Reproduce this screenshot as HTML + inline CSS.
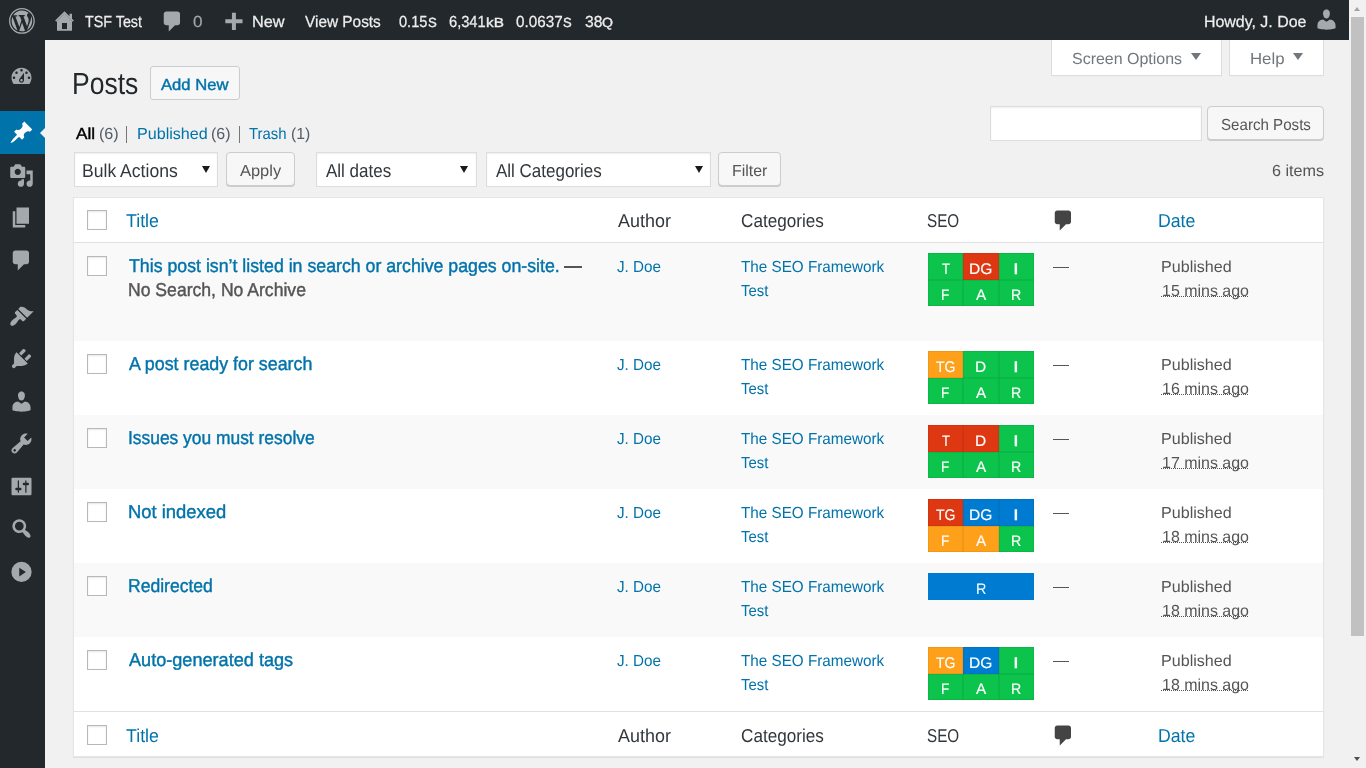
<!DOCTYPE html>
<html lang="en"><head><meta charset="utf-8"><title>Posts ‹ TSF Test — WordPress</title>
<style>
html,body{margin:0;padding:0;width:1366px;height:768px;overflow:hidden;background:#f1f1f1;}
body{position:relative;font-family:"Liberation Sans",sans-serif;}
.t{position:absolute;white-space:nowrap;transform-origin:0 0;display:block;}
.i{position:absolute;display:block;overflow:visible;}
#w{position:absolute;left:0;top:0;width:1366px;height:768px;will-change:transform;text-rendering:geometricPrecision;}
</style></head><body>
<div id="w">
<div style="position:absolute;left:0px;top:0px;width:1349px;height:40px;background:#23282d"></div>
<div style="position:absolute;left:0px;top:40px;width:45px;height:728px;background:#23282d"></div>
<div style="position:absolute;left:0px;top:111.25px;width:45px;height:42.5px;background:#0073aa"></div>
<div style="position:absolute;left:40px;top:127.5px;width:0;height:0;border:5px solid transparent;border-left-width:0;border-right:5px solid #f1f1f1"></div>
<div style="position:absolute;left:1349px;top:0px;width:17px;height:768px;background:#f1f1f1"></div>
<div style="position:absolute;left:1351px;top:17px;width:13px;height:619px;background:#c1c1c1"></div>
<div style="position:absolute;left:1353.7px;top:6.6px;width:0;height:0;border:3.8px solid transparent;border-top-width:0;border-bottom:4.4px solid #a3a3a3"></div>
<div style="position:absolute;left:1353.7px;top:756.8px;width:0;height:0;border:3.8px solid transparent;border-bottom-width:0;border-top:4.4px solid #505050"></div>
<svg class="i" style="left:8.5px;top:7.6px" width="25.8" height="25.8" viewBox="0 0 20 20"><path fill="#a4a9ad" fill-rule="evenodd" d="M20 10c0-5.52-4.48-10-10-10S0 4.48 0 10s4.48 10 10 10 10-4.48 10-10zM10 1.01c4.97 0 8.99 4.02 8.99 8.99s-4.02 8.99-8.99 8.99S1.01 14.97 1.01 10 5.03 1.01 10 1.01zM8.01 14.82L4.96 6.61c.49-.03 1.05-.08 1.05-.08.43-.05.38-1.01-.06-.99 0 0-1.29.1-2.13.1-.15 0-.33 0-.52-.01 1.44-2.17 3.9-3.6 6.7-3.6 2.09 0 3.99.79 5.41 2.09-.6-.08-1.45.35-1.45 1.42 0 .66.38 1.22.79 1.88.31.54.5 1.22.5 2.21 0 1.34-1.27 4.48-1.27 4.48l-2.71-7.5c.48-.03.75-.16.75-.16.43-.05.38-1.1-.05-1.08 0 0-1.3.11-2.14.11-.78 0-2.11-.11-2.11-.11-.43-.02-.48 1.06-.05 1.08l.84.08 1.12 3.04zM14.030 16.970L16.640 10s.67-1.690.39-3.810c.63 1.140.94 2.420.94 3.810 0 2.960-1.560 5.580-3.940 6.970zM2.680 6.770L6.500 17.250c-2.670-1.300-4.470-4.080-4.470-7.250 0-1.160.2-2.230.65-3.230zM10.130 11.300l2.290 6.250c-.75.27-1.570.42-2.420.42-.72 0-1.410-.11-2.060-.3z"/></svg>
<svg class="i" style="left:52.4px;top:8.3px" width="25" height="25" viewBox="0 0 20 20"><path fill="#a4a9ad" fill-rule="evenodd" d="M16 8.5l1.53 1.53-1.06 1.06L10 4.62l-6.47 6.47-1.06-1.06L10 2.5l4 4v-2h2v4zm-6-2.46l6 5.99V18H4v-5.970zM12 17v-5H8v5h4z"/></svg>
<svg class="i" style="left:52.4px;top:8.3px" width="25" height="25" viewBox="0 0 20 20"><path fill="#a4a9ad" fill-rule="evenodd" d="M10 4.3L4 10.3V18h12v-7.7zM8 12h4v5H8z"/></svg>
<span class="t" style="left:84.90px;top:15.00px;font-size:16px;line-height:16px;color:#eee;transform:scaleX(0.8939);-webkit-text-stroke:0.25px #eee;">TSF Test</span>
<svg class="i" style="left:160.3px;top:8.7px" width="25" height="25" viewBox="0 0 20 20"><path fill="#a4a9ad" fill-rule="evenodd" d="M5 2h9q.82 0 1.41.59T16 4v7q0 .82-.59 1.41T14 13h-2l-5 5v-5H5q-.82 0-1.41-.59T3 11V4q0-.82.59-1.41T5 2z"/></svg>
<span class="t" style="left:192.93px;top:15.00px;font-size:16px;line-height:16px;color:#a0a5aa;transform:scaleX(1.0710);-webkit-text-stroke:0.2px #a0a5aa;">0</span>
<svg class="i" style="left:219.6px;top:9.9px" width="26.5" height="26.5" viewBox="0 0 20 20"><path fill="#a4a9ad" fill-rule="evenodd" d="M17 7v3h-5v5H9v-5H4V7h5V2h3v5h5z"/></svg>
<span class="t" style="left:252.45px;top:15.00px;font-size:16px;line-height:16px;color:#eee;transform:scaleX(1.0186);-webkit-text-stroke:0.25px #eee;">New</span>
<span class="t" style="left:304.82px;top:15.00px;font-size:16px;line-height:16px;color:#eee;transform:scaleX(0.9614);-webkit-text-stroke:0.25px #eee;">View Posts</span>
<span class="t" style="left:399.05px;top:15.00px;font-size:16px;line-height:16px;color:#eee;transform:scaleX(0.9121);-webkit-text-stroke:0.25px #eee;">0.15</span>
<span class="t" style="left:427.88px;top:16.00px;font-size:13.2px;line-height:13.2px;color:#eee;transform:scaleX(1.0000);-webkit-text-stroke:0.35px #eee;">S</span>
<span class="t" style="left:449.44px;top:15.00px;font-size:16px;line-height:16px;color:#eee;transform:scaleX(0.9156);-webkit-text-stroke:0.25px #eee;">6,341</span>
<span class="t" style="left:485.86px;top:16.00px;font-size:13.2px;line-height:13.2px;color:#eee;transform:scaleX(1.1607);-webkit-text-stroke:0.35px #eee;">kB</span>
<span class="t" style="left:516.03px;top:15.00px;font-size:16px;line-height:16px;color:#eee;transform:scaleX(0.9526);-webkit-text-stroke:0.25px #eee;">0.0637</span>
<span class="t" style="left:562.88px;top:16.00px;font-size:13.2px;line-height:13.2px;color:#eee;transform:scaleX(0.9871);-webkit-text-stroke:0.35px #eee;">S</span>
<span class="t" style="left:584.64px;top:15.00px;font-size:16px;line-height:16px;color:#eee;transform:scaleX(0.9774);-webkit-text-stroke:0.25px #eee;">38</span>
<span class="t" style="left:602.21px;top:16.00px;font-size:13.2px;line-height:13.2px;color:#eee;transform:scaleX(1.0685);-webkit-text-stroke:0.35px #eee;">Q</span>
<span class="t" style="left:1204.28px;top:15.00px;font-size:16px;line-height:16px;color:#eee;transform:scaleX(0.9955);-webkit-text-stroke:0.25px #eee;">Howdy, J. Doe</span>
<svg class="i" style="left:1314.2px;top:7.4px" width="25" height="25" viewBox="0 0 20 20"><path fill="#a4a9ad" fill-rule="evenodd" d="M10 9.25c-2.27 0-2.73-3.44-2.73-3.44C7 4.02 7.82 2 9.970 2c2.160 0 2.980 2.020 2.710 3.810 0 0-.41 3.440-2.680 3.440zm0 2.570L12.720 10c2.390 0 4.520 2.330 4.520 4.530v2.490s-3.650 1.130-7.240 1.130c-3.650 0-7.240-1.130-7.240-1.130v-2.490c0-2.250 1.940-4.480 4.470-4.480z"/></svg>
<svg class="i" style="left:9.4px;top:63.75px" width="25" height="25" viewBox="0 0 20 20"><path fill="#a4a9ad" fill-rule="evenodd" d="M3.76 16h12.48c1.1-1.37 1.76-3.11 1.76-5 0-4.42-3.58-8-8-8s-8 3.58-8 8c0 1.89.66 3.63 1.76 5zM10 4c.55 0 1 .45 1 1s-.45 1-1 1-1-.45-1-1 .45-1 1-1zM6 6c.55 0 1 .45 1 1s-.45 1-1 1-1-.45-1-1 .45-1 1-1zm8 0c.55 0 1 .45 1 1s-.45 1-1 1-1-.45-1-1 .45-1 1-1zm-5.37 5.55L12 7v6c0 1.1-.9 2-2 2s-2-.9-2-2c0-.57.24-1.08.63-1.450zM4 10c.55 0 1 .45 1 1s-.45 1-1 1-1-.45-1-1 .45-1 1-1zm12 0c.55 0 1 .45 1 1s-.45 1-1 1-1-.45-1-1 .45-1 1-1zm-5 3c0-.55-.45-1-1-1s-1 .45-1 1 .45 1 1 1 1-.45 1-1z"/></svg>
<svg class="i" style="left:9.4px;top:120.0px" width="25" height="25" viewBox="0 0 20 20"><path fill="#fff" fill-rule="evenodd" d="M10.44 3.02l1.82-1.82 6.36 6.35-1.83 1.820c-1.05-.68-2.48-.57-3.41.36l-.75.75c-.92.93-1.04 2.35-.35 3.41l-1.83 1.82-2.41-2.41-2.8 2.79c-.42.42-3.38 2.71-3.8 2.29s1.86-3.39 2.28-3.81l2.79-2.79L4.1 9.36l1.83-1.82c1.05.69 2.48.57 3.4-.36l.75-.75c.93-.92 1.05-2.35.36-3.41z"/></svg>
<svg class="i" style="left:9.4px;top:162.5px" width="25" height="25" viewBox="0 0 20 20"><path fill="#a4a9ad" fill-rule="evenodd" d="M13 11V4c0-.55-.45-1-1-1h-1.67L9 1H5L3.67 3H2c-.55 0-1 .45-1 1v7c0 .55.45 1 1 1h10c.55 0 1-.45 1-1zM7 4.5c1.38 0 2.5 1.12 2.5 2.5S8.38 9.5 7 9.5 4.5 8.38 4.5 7 5.62 4.5 7 4.5zM14 6h5v10.5c0 1.38-1.12 2.5-2.5 2.5S14 17.88 14 16.5s1.12-2.5 2.5-2.5c.17 0 .34.02.5.05V9h-3V6zm-4 8.050V13h2v3.5c0 1.38-1.12 2.5-2.5 2.500S7 17.880 7 16.500 8.120 14 9.500 14c.17 0 .34.02.5.05z"/></svg>
<svg class="i" style="left:9.4px;top:205.0px" width="25" height="25" viewBox="0 0 20 20"><path fill="#a4a9ad" fill-rule="evenodd" d="M6 15V2h10v13H6zm-1 1h8v2H3V5h2v11z"/></svg>
<svg class="i" style="left:9.4px;top:247.5px" width="25" height="25" viewBox="0 0 20 20"><path fill="#a4a9ad" fill-rule="evenodd" d="M5 2h9q.82 0 1.41.59T16 4v7q0 .82-.59 1.41T14 13h-2l-5 5v-5H5q-.82 0-1.41-.59T3 11V4q0-.82.59-1.41T5 2z"/></svg>
<svg class="i" style="left:9.4px;top:303.75px" width="25" height="25" viewBox="0 0 20 20"><path fill="#a4a9ad" fill-rule="evenodd" d="M14.48 11.06L7.41 3.99l1.5-1.5c.5-.56 2.3-.47 3.51.32 1.21.8 1.43 1.28 2.91 2.1 1.18.64 2.45 1.26 4.45.85zm-.71.71L6.7 4.7 4.93 6.47c-.39.39-.39 1.02 0 1.41l1.060 1.06c.39.39.39 1.03 0 1.42-.6.6-1.43 1.11-2.21 1.69-.35.26-.7.53-1.01.84C1.43 14.23.4 16.08 1.4 17.07c.99 1 2.84-.03 4.18-1.36.31-.31.58-.66.85-1.02.57-.78 1.080-1.610 1.690-2.210.39-.39 1.020-.39 1.410 0l1.060 1.060c.39.39 1.020.39 1.410 0z"/></svg>
<svg class="i" style="left:9.4px;top:346.25px" width="25" height="25" viewBox="0 0 20 20"><path fill="#a4a9ad" fill-rule="evenodd" d="M13.11 4.36L9.87 7.6 8 5.73l3.24-3.24c.35-.34 1.05-.2 1.56.32.52.51.66 1.21.31 1.55zm-8 1.77l.91-1.12 9.01 9.010-1.190.840c-.71.71-2.63 1.160-3.820 1.160H6.140L4.900 17.260c-.59.59-1.540.59-2.120 0-.59-.58-.59-1.530 0-2.120l1.240-1.240v-3.880c0-1.130.4-3.190 1.090-3.890zm7.260 3.970l3.240-3.240c.34-.35 1.040-.21 1.550.31.52.51.66 1.210.31 1.550l-3.240 3.250z"/></svg>
<svg class="i" style="left:9.4px;top:388.75px" width="25" height="25" viewBox="0 0 20 20"><path fill="#a4a9ad" fill-rule="evenodd" d="M10 9.25c-2.27 0-2.73-3.44-2.73-3.44C7 4.02 7.82 2 9.970 2c2.160 0 2.980 2.020 2.710 3.810 0 0-.41 3.440-2.680 3.440zm0 2.570L12.720 10c2.390 0 4.520 2.330 4.520 4.530v2.490s-3.650 1.130-7.240 1.130c-3.650 0-7.240-1.130-7.240-1.130v-2.490c0-2.250 1.940-4.480 4.470-4.480z"/></svg>
<svg class="i" style="left:9.4px;top:431.25px" width="25" height="25" viewBox="0 0 20 20"><path fill="#a4a9ad" fill-rule="evenodd" d="M16.68 9.77c-1.34 1.34-3.3 1.67-4.95.99l-5.41 6.520c-.99.99-2.590.99-3.580 0s-.99-2.590 0-3.570l6.520-5.420c-.68-1.650-.35-3.610.99-4.950 1.280-1.280 3.120-1.620 4.720-1.060l-2.890 2.890 2.820 2.820 2.860-2.870c.53 1.580.18 3.390-1.080 4.650zM3.810 16.210c.4.39 1.040.39 1.430 0 .4-.4.4-1.040 0-1.430-.39-.4-1.030-.4-1.430 0-.39.39-.39 1.030 0 1.430z"/></svg>
<svg class="i" style="left:9.4px;top:473.75px" width="25" height="25" viewBox="0 0 20 20"><path fill="#a4a9ad" fill-rule="evenodd" d="M18 16V4c0-.55-.45-1-1-1H3c-.55 0-1 .45-1 1v12c0 .55.45 1 1 1h14c.55 0 1-.45 1-1zM8 11h1c.55 0 1 .45 1 1s-.45 1-1 1H8v1.5c0 .28-.22.5-.5.5s-.5-.22-.5-.5V13H6c-.55 0-1-.45-1-1s.45-1 1-1h1V5.5c0-.28.22-.5.5-.5s.5.22.5.5V11zm5-2h-1c-.55 0-1-.45-1-1s.45-1 1-1h1V5.500c0-.28.22-.5.5-.5s.5.22.5.5V7h1c.55 0 1 .45 1 1s-.45 1-1 1h-1v5.500c0 .28-.22.5-.5.5s-.5-.22-.5-.5V9z"/></svg>
<svg class="i" style="left:9.4px;top:516.25px" width="25" height="25" viewBox="0 0 20 20"><path fill="#a4a9ad" fill-rule="evenodd" d="M12.14 4.18c1.87 1.87 2.11 4.75.72 6.89.12.1.22.21.36.31.2.16.47.36.81.59.34.24.56.39.66.47.42.31.73.57.94.78.32.32.6.65.84 1 .25.35.44.69.59 1.040.14.35.21.68.18 1-.02.32-.14.59-.36.81s-.49.34-.81.36c-.31.02-.65-.04-.99-.19-.35-.14-.7-.34-1.040-.59-.35-.24-.68-.52-1-.84-.21-.21-.47-.52-.77-.93-.1-.13-.25-.35-.47-.66-.22-.32-.4-.57-.56-.78-.16-.2-.29-.35-.44-.5-2.070 1.090-4.690.76-6.440-.98-2.140-2.150-2.140-5.640 0-7.790 2.150-2.150 5.630-2.150 7.780 0zm-1.410 6.360c1.360-1.370 1.360-3.580 0-4.950-1.370-1.370-3.590-1.370-4.950 0-1.370 1.370-1.370 3.580 0 4.950 1.360 1.370 3.580 1.370 4.950 0z"/></svg>
<svg class="i" style="left:9.4px;top:558.75px" width="25" height="25" viewBox="0 0 20 20"><path fill="#a4a9ad" fill-rule="evenodd" d="M10 2.2a8.1 8.1 0 1 0 0 16.2 8.1 8.1 0 0 0 0-16.2zM8.2 6.9L13.5 10.4l-5.300 3.5z"/></svg>
<span class="t" style="left:72.22px;top:69.00px;font-size:30.5px;line-height:30.5px;color:#23282d;transform:scaleX(0.8701);">Posts</span>
<div style="position:absolute;left:150px;top:66px;width:90px;height:34px;box-sizing:border-box;border:1px solid #ccc;background:#f7f7f7;border-radius:3px"></div>
<span class="t" style="left:161.01px;top:78.00px;font-size:16px;line-height:16px;color:#0073aa;transform:scaleX(1.0382);-webkit-text-stroke:0.42px #0073aa;">Add New</span>
<div style="position:absolute;left:1051px;top:40px;width:171px;height:36px;box-sizing:border-box;border:1px solid #ddd;border-top:none;background:#fff;box-shadow:0 1px 1px -1px rgba(0,0,0,.1)"></div>
<div style="position:absolute;left:1229px;top:40px;width:95px;height:36px;box-sizing:border-box;border:1px solid #ddd;border-top:none;background:#fff;box-shadow:0 1px 1px -1px rgba(0,0,0,.1)"></div>
<span class="t" style="left:1072.28px;top:52.00px;font-size:16px;line-height:16px;color:#72777c;transform:scaleX(0.9979);">Screen Options</span>
<span class="t" style="left:1249.59px;top:52.00px;font-size:16px;line-height:16px;color:#72777c;transform:scaleX(1.0484);">Help</span>
<div style="position:absolute;left:1191px;top:53.2px;width:0;height:0;border:5px solid transparent;border-bottom-width:0;border-top:7.8px solid #72777c"></div>
<div style="position:absolute;left:1292.6px;top:53.2px;width:0;height:0;border:5px solid transparent;border-bottom-width:0;border-top:7.8px solid #72777c"></div>
<span class="t" style="left:76.21px;top:127.00px;font-size:16px;line-height:16px;color:#000;transform:scaleX(1.0734);-webkit-text-stroke:0.42px #000;">All</span>
<span class="t" style="left:98.92px;top:127.00px;font-size:16px;line-height:16px;color:#555d66;transform:scaleX(1.0085);">(6)</span>
<div style="position:absolute;left:126.1px;top:125.5px;width:1.3px;height:17px;background:#777"></div>
<span class="t" style="left:136.64px;top:127.00px;font-size:16px;line-height:16px;color:#0073aa;transform:scaleX(1.0059);">Published</span>
<span class="t" style="left:211.43px;top:127.00px;font-size:16px;line-height:16px;color:#555d66;transform:scaleX(0.9972);">(6)</span>
<div style="position:absolute;left:238.6px;top:125.5px;width:1.3px;height:17px;background:#777"></div>
<span class="t" style="left:249.37px;top:127.00px;font-size:16px;line-height:16px;color:#0073aa;transform:scaleX(0.9333);">Trash</span>
<span class="t" style="left:290.64px;top:127.00px;font-size:16px;line-height:16px;color:#555d66;transform:scaleX(0.9803);">(1)</span>
<div style="position:absolute;left:990px;top:106px;width:212px;height:35px;box-sizing:border-box;border:1px solid #ddd;background:#fff;box-shadow:inset 0 1px 2px rgba(0,0,0,.07)"></div>
<div style="position:absolute;left:1207px;top:106px;width:117px;height:34px;box-sizing:border-box;border:1px solid #ccc;background:#f7f7f7;border-radius:4px;box-shadow:0 1px 0 #ccc"></div>
<span class="t" style="left:1220.51px;top:118.00px;font-size:16px;line-height:16px;color:#555;transform:scaleX(0.9447);">Search Posts</span>
<div style="position:absolute;left:74px;top:152px;width:144px;height:35px;box-sizing:border-box;border:1px solid #ddd;background:#fff;box-shadow:inset 0 1px 2px rgba(0,0,0,.07)"></div>
<span class="t" style="left:81.68px;top:162.00px;font-size:18.6px;line-height:18.6px;color:#32373c;transform:scaleX(0.9449);">Bulk Actions</span>
<div style="position:absolute;left:201.6px;top:165.6px;width:0;height:0;border:4px solid transparent;border-bottom-width:0;border-top:7.5px solid #1a1a1a"></div>
<div style="position:absolute;left:226px;top:152px;width:68.5px;height:34px;box-sizing:border-box;border:1px solid #ccc;background:#f7f7f7;border-radius:4px;box-shadow:0 1px 0 #ccc"></div>
<span class="t" style="left:239.70px;top:164.00px;font-size:16px;line-height:16px;color:#555;transform:scaleX(1.0275);">Apply</span>
<div style="position:absolute;left:316px;top:152px;width:161px;height:35px;box-sizing:border-box;border:1px solid #ddd;background:#fff;box-shadow:inset 0 1px 2px rgba(0,0,0,.07)"></div>
<span class="t" style="left:325.60px;top:162.00px;font-size:18.6px;line-height:18.6px;color:#32373c;transform:scaleX(0.9143);">All dates</span>
<div style="position:absolute;left:460.4px;top:165.6px;width:0;height:0;border:4px solid transparent;border-bottom-width:0;border-top:7.5px solid #1a1a1a"></div>
<div style="position:absolute;left:486px;top:152px;width:225px;height:35px;box-sizing:border-box;border:1px solid #ddd;background:#fff;box-shadow:inset 0 1px 2px rgba(0,0,0,.07)"></div>
<span class="t" style="left:495.80px;top:162.00px;font-size:18.6px;line-height:18.6px;color:#32373c;transform:scaleX(0.9135);">All Categories</span>
<div style="position:absolute;left:694.5px;top:165.6px;width:0;height:0;border:4px solid transparent;border-bottom-width:0;border-top:7.5px solid #1a1a1a"></div>
<div style="position:absolute;left:718px;top:152px;width:62.5px;height:34px;box-sizing:border-box;border:1px solid #ccc;background:#f7f7f7;border-radius:4px;box-shadow:0 1px 0 #ccc"></div>
<span class="t" style="left:731.75px;top:164.00px;font-size:16px;line-height:16px;color:#555;transform:scaleX(0.9963);">Filter</span>
<span class="t" style="left:1271.74px;top:164.00px;font-size:16px;line-height:16px;color:#555;transform:scaleX(1.0104);">6 items</span>
<div style="position:absolute;left:73px;top:197px;width:1251px;height:560px;box-sizing:border-box;border:1px solid #e5e5e5;background:#fff;box-shadow:0 1px 1px rgba(0,0,0,.06)"></div>
<div style="position:absolute;left:74px;top:242px;width:1249px;height:1px;background:#e1e1e1"></div>
<div style="position:absolute;left:74px;top:711px;width:1249px;height:1px;background:#e1e1e1"></div>
<div style="position:absolute;left:74px;top:243px;width:1249px;height:98px;background:#f9f9f9"></div>
<div style="position:absolute;left:74px;top:415px;width:1249px;height:74px;background:#f9f9f9"></div>
<div style="position:absolute;left:74px;top:563px;width:1249px;height:74px;background:#f9f9f9"></div>
<div style="position:absolute;left:87px;top:210px;width:20px;height:20px;box-sizing:border-box;border:1px solid #b4b9be;background:#fff;box-shadow:inset 0 1px 2px rgba(0,0,0,.1)"></div>
<span class="t" style="left:125.84px;top:212.00px;font-size:18.6px;line-height:18.6px;color:#0073aa;transform:scaleX(0.9558);">Title</span>
<span class="t" style="left:617.70px;top:212.00px;font-size:18.6px;line-height:18.6px;color:#32373c;transform:scaleX(0.9648);">Author</span>
<span class="t" style="left:740.69px;top:212.00px;font-size:18.6px;line-height:18.6px;color:#32373c;transform:scaleX(0.9219);">Categories</span>
<span class="t" style="left:927.49px;top:212.00px;font-size:18.6px;line-height:18.6px;color:#32373c;transform:scaleX(0.8185);">SEO</span>
<svg class="i" style="left:1050.9px;top:208.3px" width="25" height="25" viewBox="0 0 20 20"><path fill="#444" fill-rule="evenodd" d="M5 2h9q.82 0 1.41.59T16 4v7q0 .82-.59 1.41T14 13h-2l-5 5v-5H5q-.82 0-1.41-.59T3 11V4q0-.82.59-1.41T5 2z"/></svg>
<span class="t" style="left:1157.77px;top:212.00px;font-size:18.6px;line-height:18.6px;color:#0073aa;transform:scaleX(0.9508);">Date</span>
<div style="position:absolute;left:87px;top:725px;width:20px;height:20px;box-sizing:border-box;border:1px solid #b4b9be;background:#fff;box-shadow:inset 0 1px 2px rgba(0,0,0,.1)"></div>
<span class="t" style="left:125.84px;top:727.00px;font-size:18.6px;line-height:18.6px;color:#0073aa;transform:scaleX(0.9558);">Title</span>
<span class="t" style="left:617.70px;top:727.00px;font-size:18.6px;line-height:18.6px;color:#32373c;transform:scaleX(0.9648);">Author</span>
<span class="t" style="left:740.69px;top:727.00px;font-size:18.6px;line-height:18.6px;color:#32373c;transform:scaleX(0.9219);">Categories</span>
<span class="t" style="left:927.49px;top:727.00px;font-size:18.6px;line-height:18.6px;color:#32373c;transform:scaleX(0.8185);">SEO</span>
<svg class="i" style="left:1050.9px;top:723.2px" width="25" height="25" viewBox="0 0 20 20"><path fill="#444" fill-rule="evenodd" d="M5 2h9q.82 0 1.41.59T16 4v7q0 .82-.59 1.41T14 13h-2l-5 5v-5H5q-.82 0-1.41-.59T3 11V4q0-.82.59-1.41T5 2z"/></svg>
<span class="t" style="left:1157.77px;top:727.00px;font-size:18.6px;line-height:18.6px;color:#0073aa;transform:scaleX(0.9508);">Date</span>
<div style="position:absolute;left:87px;top:256px;width:20px;height:20px;box-sizing:border-box;border:1px solid #b4b9be;background:#fff;box-shadow:inset 0 1px 2px rgba(0,0,0,.1)"></div>
<span class="t" style="left:128.65px;top:257.00px;font-size:18.6px;line-height:18.6px;color:#0073aa;transform:scaleX(0.9538);-webkit-text-stroke:0.42px #0073aa;">This post isn’t listed in search or archive pages on-site.</span>
<div style="position:absolute;left:564px;top:266px;width:18.2px;height:1.8px;background:#555"></div>
<span class="t" style="left:128.29px;top:281.00px;font-size:18.6px;line-height:18.6px;color:#555;transform:scaleX(0.9460);-webkit-text-stroke:0.42px #555;">No Search, No Archive</span>
<span class="t" style="left:616.56px;top:260.00px;font-size:16px;line-height:16px;color:#0073aa;transform:scaleX(0.9521);">J. Doe</span>
<span class="t" style="left:741.06px;top:260.00px;font-size:16px;line-height:16px;color:#0073aa;transform:scaleX(0.9532);">The SEO Framework</span>
<span class="t" style="left:741.07px;top:284.00px;font-size:16px;line-height:16px;color:#0073aa;transform:scaleX(0.9310);">Test</span>
<div style="position:absolute;left:928.0px;top:253.0px;width:35.33px;height:26.5px;background:#0cc34b;box-shadow:inset 0 0 0 .5px rgba(0,0,0,.12)"></div>
<span class="t" style="left:941.73px;top:262.00px;font-size:15.3px;line-height:15.3px;color:#fff;transform:scaleX(0.8514);-webkit-text-stroke:0.15px #fff;">T</span>
<div style="position:absolute;left:963.33px;top:253.0px;width:35.33px;height:26.5px;background:#dd3811;box-shadow:inset 0 0 0 .5px rgba(0,0,0,.12)"></div>
<span class="t" style="left:969.30px;top:262.00px;font-size:15.3px;line-height:15.3px;color:#fff;transform:scaleX(1.0171);-webkit-text-stroke:0.15px #fff;">DG</span>
<div style="position:absolute;left:998.67px;top:253.0px;width:35.33px;height:26.5px;background:#0cc34b;box-shadow:inset 0 0 0 .5px rgba(0,0,0,.12)"></div>
<span class="t" style="left:1013.43px;top:262.00px;font-size:15.3px;line-height:15.3px;color:#fff;transform:scaleX(1.3667);-webkit-text-stroke:0.25px #fff;">I</span>
<div style="position:absolute;left:928.0px;top:279.5px;width:35.33px;height:26.5px;background:#0cc34b;box-shadow:inset 0 0 0 .5px rgba(0,0,0,.12)"></div>
<span class="t" style="left:941.23px;top:288.00px;font-size:15.3px;line-height:15.3px;color:#fff;transform:scaleX(0.8867);-webkit-text-stroke:0.15px #fff;">F</span>
<div style="position:absolute;left:963.33px;top:279.5px;width:35.33px;height:26.5px;background:#0cc34b;box-shadow:inset 0 0 0 .5px rgba(0,0,0,.12)"></div>
<span class="t" style="left:975.88px;top:288.00px;font-size:15.3px;line-height:15.3px;color:#fff;transform:scaleX(1.0000);-webkit-text-stroke:0.15px #fff;">A</span>
<div style="position:absolute;left:998.67px;top:279.5px;width:35.33px;height:26.5px;background:#0cc34b;box-shadow:inset 0 0 0 .5px rgba(0,0,0,.12)"></div>
<span class="t" style="left:1011.45px;top:288.00px;font-size:15.3px;line-height:15.3px;color:#fff;transform:scaleX(0.9260);-webkit-text-stroke:0.15px #fff;">R</span>
<div style="position:absolute;left:1052.9px;top:267px;width:15.8px;height:1.1px;background:#555"></div>
<span class="t" style="left:1160.64px;top:260.00px;font-size:16px;line-height:16px;color:#555;transform:scaleX(1.0059);">Published</span>
<span class="t" style="left:1161.58px;top:284.00px;font-size:16px;line-height:16px;color:#555;transform:scaleX(0.9980);">15 mins ago</span>
<div style="position:absolute;left:1161px;top:296px;width:87px;height:0px;border-bottom:1px dotted #555"></div>
<div style="position:absolute;left:87px;top:354px;width:20px;height:20px;box-sizing:border-box;border:1px solid #b4b9be;background:#fff;box-shadow:inset 0 1px 2px rgba(0,0,0,.1)"></div>
<span class="t" style="left:128.71px;top:355.00px;font-size:18.6px;line-height:18.6px;color:#0073aa;transform:scaleX(0.9591);-webkit-text-stroke:0.42px #0073aa;">A post ready for search</span>
<span class="t" style="left:616.56px;top:358.00px;font-size:16px;line-height:16px;color:#0073aa;transform:scaleX(0.9521);">J. Doe</span>
<span class="t" style="left:741.06px;top:358.00px;font-size:16px;line-height:16px;color:#0073aa;transform:scaleX(0.9532);">The SEO Framework</span>
<span class="t" style="left:741.07px;top:382.00px;font-size:16px;line-height:16px;color:#0073aa;transform:scaleX(0.9310);">Test</span>
<div style="position:absolute;left:928.0px;top:351.0px;width:35.33px;height:26.5px;background:#ffa01b;box-shadow:inset 0 0 0 .5px rgba(0,0,0,.12)"></div>
<span class="t" style="left:936.31px;top:360.00px;font-size:15.3px;line-height:15.3px;color:#fff;transform:scaleX(0.9182);-webkit-text-stroke:0.15px #fff;">TG</span>
<div style="position:absolute;left:963.33px;top:351.0px;width:35.33px;height:26.5px;background:#0cc34b;box-shadow:inset 0 0 0 .5px rgba(0,0,0,.12)"></div>
<span class="t" style="left:975.11px;top:360.00px;font-size:15.3px;line-height:15.3px;color:#fff;transform:scaleX(1.0137);-webkit-text-stroke:0.15px #fff;">D</span>
<div style="position:absolute;left:998.67px;top:351.0px;width:35.33px;height:26.5px;background:#0cc34b;box-shadow:inset 0 0 0 .5px rgba(0,0,0,.12)"></div>
<span class="t" style="left:1013.43px;top:360.00px;font-size:15.3px;line-height:15.3px;color:#fff;transform:scaleX(1.3667);-webkit-text-stroke:0.25px #fff;">I</span>
<div style="position:absolute;left:928.0px;top:377.5px;width:35.33px;height:26.5px;background:#0cc34b;box-shadow:inset 0 0 0 .5px rgba(0,0,0,.12)"></div>
<span class="t" style="left:941.23px;top:386.00px;font-size:15.3px;line-height:15.3px;color:#fff;transform:scaleX(0.8867);-webkit-text-stroke:0.15px #fff;">F</span>
<div style="position:absolute;left:963.33px;top:377.5px;width:35.33px;height:26.5px;background:#0cc34b;box-shadow:inset 0 0 0 .5px rgba(0,0,0,.12)"></div>
<span class="t" style="left:975.88px;top:386.00px;font-size:15.3px;line-height:15.3px;color:#fff;transform:scaleX(1.0000);-webkit-text-stroke:0.15px #fff;">A</span>
<div style="position:absolute;left:998.67px;top:377.5px;width:35.33px;height:26.5px;background:#0cc34b;box-shadow:inset 0 0 0 .5px rgba(0,0,0,.12)"></div>
<span class="t" style="left:1011.45px;top:386.00px;font-size:15.3px;line-height:15.3px;color:#fff;transform:scaleX(0.9260);-webkit-text-stroke:0.15px #fff;">R</span>
<div style="position:absolute;left:1052.9px;top:365px;width:15.8px;height:1.1px;background:#555"></div>
<span class="t" style="left:1160.64px;top:358.00px;font-size:16px;line-height:16px;color:#555;transform:scaleX(1.0059);">Published</span>
<span class="t" style="left:1161.58px;top:382.00px;font-size:16px;line-height:16px;color:#555;transform:scaleX(0.9980);">16 mins ago</span>
<div style="position:absolute;left:1161px;top:394px;width:87px;height:0px;border-bottom:1px dotted #555"></div>
<div style="position:absolute;left:87px;top:428px;width:20px;height:20px;box-sizing:border-box;border:1px solid #b4b9be;background:#fff;box-shadow:inset 0 1px 2px rgba(0,0,0,.1)"></div>
<span class="t" style="left:128.19px;top:429.00px;font-size:18.6px;line-height:18.6px;color:#0073aa;transform:scaleX(0.9357);-webkit-text-stroke:0.42px #0073aa;">Issues you must resolve</span>
<span class="t" style="left:616.56px;top:432.00px;font-size:16px;line-height:16px;color:#0073aa;transform:scaleX(0.9521);">J. Doe</span>
<span class="t" style="left:741.06px;top:432.00px;font-size:16px;line-height:16px;color:#0073aa;transform:scaleX(0.9532);">The SEO Framework</span>
<span class="t" style="left:741.07px;top:456.00px;font-size:16px;line-height:16px;color:#0073aa;transform:scaleX(0.9310);">Test</span>
<div style="position:absolute;left:928.0px;top:425.0px;width:35.33px;height:26.5px;background:#dd3811;box-shadow:inset 0 0 0 .5px rgba(0,0,0,.12)"></div>
<span class="t" style="left:941.73px;top:434.00px;font-size:15.3px;line-height:15.3px;color:#fff;transform:scaleX(0.8514);-webkit-text-stroke:0.15px #fff;">T</span>
<div style="position:absolute;left:963.33px;top:425.0px;width:35.33px;height:26.5px;background:#dd3811;box-shadow:inset 0 0 0 .5px rgba(0,0,0,.12)"></div>
<span class="t" style="left:975.11px;top:434.00px;font-size:15.3px;line-height:15.3px;color:#fff;transform:scaleX(1.0137);-webkit-text-stroke:0.15px #fff;">D</span>
<div style="position:absolute;left:998.67px;top:425.0px;width:35.33px;height:26.5px;background:#0cc34b;box-shadow:inset 0 0 0 .5px rgba(0,0,0,.12)"></div>
<span class="t" style="left:1013.43px;top:434.00px;font-size:15.3px;line-height:15.3px;color:#fff;transform:scaleX(1.3667);-webkit-text-stroke:0.25px #fff;">I</span>
<div style="position:absolute;left:928.0px;top:451.5px;width:35.33px;height:26.5px;background:#0cc34b;box-shadow:inset 0 0 0 .5px rgba(0,0,0,.12)"></div>
<span class="t" style="left:941.23px;top:460.00px;font-size:15.3px;line-height:15.3px;color:#fff;transform:scaleX(0.8867);-webkit-text-stroke:0.15px #fff;">F</span>
<div style="position:absolute;left:963.33px;top:451.5px;width:35.33px;height:26.5px;background:#0cc34b;box-shadow:inset 0 0 0 .5px rgba(0,0,0,.12)"></div>
<span class="t" style="left:975.88px;top:460.00px;font-size:15.3px;line-height:15.3px;color:#fff;transform:scaleX(1.0000);-webkit-text-stroke:0.15px #fff;">A</span>
<div style="position:absolute;left:998.67px;top:451.5px;width:35.33px;height:26.5px;background:#0cc34b;box-shadow:inset 0 0 0 .5px rgba(0,0,0,.12)"></div>
<span class="t" style="left:1011.45px;top:460.00px;font-size:15.3px;line-height:15.3px;color:#fff;transform:scaleX(0.9260);-webkit-text-stroke:0.15px #fff;">R</span>
<div style="position:absolute;left:1052.9px;top:439px;width:15.8px;height:1.1px;background:#555"></div>
<span class="t" style="left:1160.64px;top:432.00px;font-size:16px;line-height:16px;color:#555;transform:scaleX(1.0059);">Published</span>
<span class="t" style="left:1161.58px;top:456.00px;font-size:16px;line-height:16px;color:#555;transform:scaleX(0.9980);">17 mins ago</span>
<div style="position:absolute;left:1161px;top:468px;width:87px;height:0px;border-bottom:1px dotted #555"></div>
<div style="position:absolute;left:87px;top:502px;width:20px;height:20px;box-sizing:border-box;border:1px solid #b4b9be;background:#fff;box-shadow:inset 0 1px 2px rgba(0,0,0,.1)"></div>
<span class="t" style="left:128.23px;top:503.00px;font-size:18.6px;line-height:18.6px;color:#0073aa;transform:scaleX(0.9889);-webkit-text-stroke:0.42px #0073aa;">Not indexed</span>
<span class="t" style="left:616.56px;top:506.00px;font-size:16px;line-height:16px;color:#0073aa;transform:scaleX(0.9521);">J. Doe</span>
<span class="t" style="left:741.06px;top:506.00px;font-size:16px;line-height:16px;color:#0073aa;transform:scaleX(0.9532);">The SEO Framework</span>
<span class="t" style="left:741.07px;top:530.00px;font-size:16px;line-height:16px;color:#0073aa;transform:scaleX(0.9310);">Test</span>
<div style="position:absolute;left:928.0px;top:499.0px;width:35.33px;height:26.5px;background:#dd3811;box-shadow:inset 0 0 0 .5px rgba(0,0,0,.12)"></div>
<span class="t" style="left:936.31px;top:508.00px;font-size:15.3px;line-height:15.3px;color:#fff;transform:scaleX(0.9182);-webkit-text-stroke:0.15px #fff;">TG</span>
<div style="position:absolute;left:963.33px;top:499.0px;width:35.33px;height:26.5px;background:#007bd2;box-shadow:inset 0 0 0 .5px rgba(0,0,0,.12)"></div>
<span class="t" style="left:969.30px;top:508.00px;font-size:15.3px;line-height:15.3px;color:#fff;transform:scaleX(1.0171);-webkit-text-stroke:0.15px #fff;">DG</span>
<div style="position:absolute;left:998.67px;top:499.0px;width:35.33px;height:26.5px;background:#007bd2;box-shadow:inset 0 0 0 .5px rgba(0,0,0,.12)"></div>
<span class="t" style="left:1013.43px;top:508.00px;font-size:15.3px;line-height:15.3px;color:#fff;transform:scaleX(1.3667);-webkit-text-stroke:0.25px #fff;">I</span>
<div style="position:absolute;left:928.0px;top:525.5px;width:35.33px;height:26.5px;background:#ffa01b;box-shadow:inset 0 0 0 .5px rgba(0,0,0,.12)"></div>
<span class="t" style="left:941.23px;top:534.00px;font-size:15.3px;line-height:15.3px;color:#fff;transform:scaleX(0.8867);-webkit-text-stroke:0.15px #fff;">F</span>
<div style="position:absolute;left:963.33px;top:525.5px;width:35.33px;height:26.5px;background:#ffa01b;box-shadow:inset 0 0 0 .5px rgba(0,0,0,.12)"></div>
<span class="t" style="left:975.88px;top:534.00px;font-size:15.3px;line-height:15.3px;color:#fff;transform:scaleX(1.0000);-webkit-text-stroke:0.15px #fff;">A</span>
<div style="position:absolute;left:998.67px;top:525.5px;width:35.33px;height:26.5px;background:#0cc34b;box-shadow:inset 0 0 0 .5px rgba(0,0,0,.12)"></div>
<span class="t" style="left:1011.45px;top:534.00px;font-size:15.3px;line-height:15.3px;color:#fff;transform:scaleX(0.9260);-webkit-text-stroke:0.15px #fff;">R</span>
<div style="position:absolute;left:1052.9px;top:513px;width:15.8px;height:1.1px;background:#555"></div>
<span class="t" style="left:1160.64px;top:506.00px;font-size:16px;line-height:16px;color:#555;transform:scaleX(1.0059);">Published</span>
<span class="t" style="left:1161.58px;top:530.00px;font-size:16px;line-height:16px;color:#555;transform:scaleX(0.9980);">18 mins ago</span>
<div style="position:absolute;left:1161px;top:542px;width:87px;height:0px;border-bottom:1px dotted #555"></div>
<div style="position:absolute;left:87px;top:576px;width:20px;height:20px;box-sizing:border-box;border:1px solid #b4b9be;background:#fff;box-shadow:inset 0 1px 2px rgba(0,0,0,.1)"></div>
<span class="t" style="left:128.29px;top:577.00px;font-size:18.6px;line-height:18.6px;color:#0073aa;transform:scaleX(0.9438);-webkit-text-stroke:0.42px #0073aa;">Redirected</span>
<span class="t" style="left:616.56px;top:580.00px;font-size:16px;line-height:16px;color:#0073aa;transform:scaleX(0.9521);">J. Doe</span>
<span class="t" style="left:741.06px;top:580.00px;font-size:16px;line-height:16px;color:#0073aa;transform:scaleX(0.9532);">The SEO Framework</span>
<span class="t" style="left:741.07px;top:604.00px;font-size:16px;line-height:16px;color:#0073aa;transform:scaleX(0.9310);">Test</span>
<div style="position:absolute;left:928px;top:573px;width:106px;height:26.5px;background:#007bd2"></div>
<span class="t" style="left:976.02px;top:582.00px;font-size:15.3px;line-height:15.3px;color:#fff;transform:scaleX(0.9425);">R</span>
<div style="position:absolute;left:1052.9px;top:587px;width:15.8px;height:1.1px;background:#555"></div>
<span class="t" style="left:1160.64px;top:580.00px;font-size:16px;line-height:16px;color:#555;transform:scaleX(1.0059);">Published</span>
<span class="t" style="left:1161.58px;top:604.00px;font-size:16px;line-height:16px;color:#555;transform:scaleX(0.9980);">18 mins ago</span>
<div style="position:absolute;left:1161px;top:616px;width:87px;height:0px;border-bottom:1px dotted #555"></div>
<div style="position:absolute;left:87px;top:650px;width:20px;height:20px;box-sizing:border-box;border:1px solid #b4b9be;background:#fff;box-shadow:inset 0 1px 2px rgba(0,0,0,.1)"></div>
<span class="t" style="left:128.91px;top:651.00px;font-size:18.6px;line-height:18.6px;color:#0073aa;transform:scaleX(0.9740);-webkit-text-stroke:0.42px #0073aa;">Auto-generated tags</span>
<span class="t" style="left:616.56px;top:654.00px;font-size:16px;line-height:16px;color:#0073aa;transform:scaleX(0.9521);">J. Doe</span>
<span class="t" style="left:741.06px;top:654.00px;font-size:16px;line-height:16px;color:#0073aa;transform:scaleX(0.9532);">The SEO Framework</span>
<span class="t" style="left:741.07px;top:678.00px;font-size:16px;line-height:16px;color:#0073aa;transform:scaleX(0.9310);">Test</span>
<div style="position:absolute;left:928.0px;top:647.0px;width:35.33px;height:26.5px;background:#ffa01b;box-shadow:inset 0 0 0 .5px rgba(0,0,0,.12)"></div>
<span class="t" style="left:936.31px;top:656.00px;font-size:15.3px;line-height:15.3px;color:#fff;transform:scaleX(0.9182);-webkit-text-stroke:0.15px #fff;">TG</span>
<div style="position:absolute;left:963.33px;top:647.0px;width:35.33px;height:26.5px;background:#007bd2;box-shadow:inset 0 0 0 .5px rgba(0,0,0,.12)"></div>
<span class="t" style="left:969.30px;top:656.00px;font-size:15.3px;line-height:15.3px;color:#fff;transform:scaleX(1.0171);-webkit-text-stroke:0.15px #fff;">DG</span>
<div style="position:absolute;left:998.67px;top:647.0px;width:35.33px;height:26.5px;background:#0cc34b;box-shadow:inset 0 0 0 .5px rgba(0,0,0,.12)"></div>
<span class="t" style="left:1013.43px;top:656.00px;font-size:15.3px;line-height:15.3px;color:#fff;transform:scaleX(1.3667);-webkit-text-stroke:0.25px #fff;">I</span>
<div style="position:absolute;left:928.0px;top:673.5px;width:35.33px;height:26.5px;background:#0cc34b;box-shadow:inset 0 0 0 .5px rgba(0,0,0,.12)"></div>
<span class="t" style="left:941.23px;top:682.00px;font-size:15.3px;line-height:15.3px;color:#fff;transform:scaleX(0.8867);-webkit-text-stroke:0.15px #fff;">F</span>
<div style="position:absolute;left:963.33px;top:673.5px;width:35.33px;height:26.5px;background:#0cc34b;box-shadow:inset 0 0 0 .5px rgba(0,0,0,.12)"></div>
<span class="t" style="left:975.88px;top:682.00px;font-size:15.3px;line-height:15.3px;color:#fff;transform:scaleX(1.0000);-webkit-text-stroke:0.15px #fff;">A</span>
<div style="position:absolute;left:998.67px;top:673.5px;width:35.33px;height:26.5px;background:#0cc34b;box-shadow:inset 0 0 0 .5px rgba(0,0,0,.12)"></div>
<span class="t" style="left:1011.45px;top:682.00px;font-size:15.3px;line-height:15.3px;color:#fff;transform:scaleX(0.9260);-webkit-text-stroke:0.15px #fff;">R</span>
<div style="position:absolute;left:1052.9px;top:661px;width:15.8px;height:1.1px;background:#555"></div>
<span class="t" style="left:1160.64px;top:654.00px;font-size:16px;line-height:16px;color:#555;transform:scaleX(1.0059);">Published</span>
<span class="t" style="left:1161.58px;top:678.00px;font-size:16px;line-height:16px;color:#555;transform:scaleX(0.9980);">18 mins ago</span>
<div style="position:absolute;left:1161px;top:690px;width:87px;height:0px;border-bottom:1px dotted #555"></div>
</div>
</body></html>
